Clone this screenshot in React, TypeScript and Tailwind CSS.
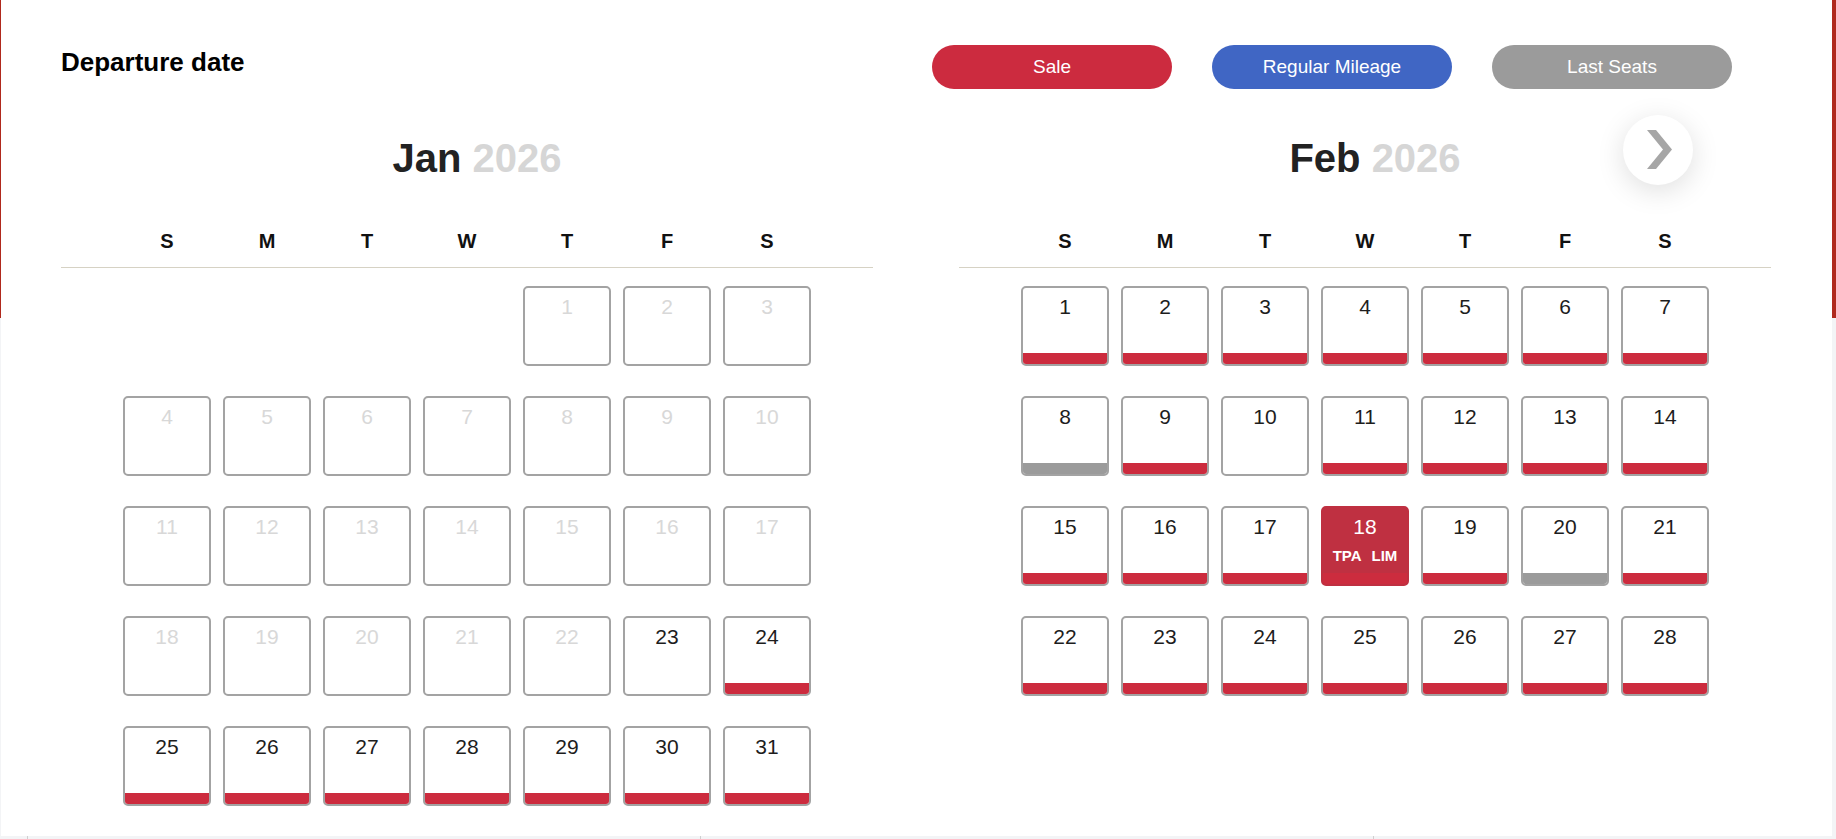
import React from 'react';

type Mark = 'sale' | 'last' | 'none';

type Day = {
  n: number;
  disabled?: boolean;
  mark: Mark;
  selected?: boolean;
};

const janDays: Day[] = Array.from({ length: 31 }, (_, i) => {
  const n = i + 1;
  if (n <= 22) return { n, disabled: true, mark: 'none' as Mark };
  if (n === 23) return { n, mark: 'none' as Mark };
  return { n, mark: 'sale' as Mark };
});

const febDays: Day[] = Array.from({ length: 28 }, (_, i) => {
  const n = i + 1;
  if (n === 8 || n === 20) return { n, mark: 'last' as Mark };
  if (n === 10) return { n, mark: 'none' as Mark };
  if (n === 18) return { n, mark: 'sale' as Mark, selected: true };
  return { n, mark: 'sale' as Mark };
});

const WEEK = ['S', 'M', 'T', 'W', 'T', 'F', 'S'];

function DayCell({ d }: { d: Day }) {
  if (d.selected) {
    return (
      <div className="mx-auto flex h-[80px] w-[88px] flex-col overflow-hidden rounded-[5px] border-2 border-[#bf3041] bg-[#bf3041] text-white">
        <div className="pt-[8px] text-center text-[21px] leading-[21px]">{d.n}</div>
        <div className="mt-[11px] flex justify-center gap-[10px] text-[15px] font-bold leading-[15px]">
          <span>TPA</span>
          <span>LIM</span>
        </div>
        <div className="mt-auto h-[11px] bg-[#cc2c3e]" />
      </div>
    );
  }
  return (
    <div className="mx-auto flex h-[80px] w-[88px] flex-col overflow-hidden rounded-[5px] border-2 border-[#a3a3a3] bg-white">
      <div
        className={
          d.disabled
            ? 'pt-[8px] text-center text-[21px] leading-[21px] text-[#d8d8d8]'
            : 'pt-[8px] text-center text-[21px] leading-[21px] text-[#1d1d1d]'
        }
      >
        {d.n}
      </div>
      {d.mark === 'sale' && <div className="mt-auto h-[11px] bg-[#cc2b3e]" />}
      {d.mark === 'last' && <div className="mt-auto h-[11px] bg-[#9b9b9b]" />}
    </div>
  );
}

function Month({
  name,
  year,
  offset,
  days,
  showNext,
}: {
  name: string;
  year: string;
  offset: number;
  days: Day[];
  showNext?: boolean;
}) {
  return (
    <div className="relative w-[812px]">
      {showNext && (
        <button className="absolute right-[78px] top-[-23px] h-[70px] w-[70px] rounded-full bg-white shadow-[0_6px_28px_rgba(0,0,0,0.13)]">
          <svg width="70" height="70" viewBox="0 0 70 70" className="block">
            <polygon points="24,15 33,15 49,34.5 33,54 24,54 40,34.5" fill="#a6a6a6" />
          </svg>
        </button>
      )}

      <h2 className="pl-[20px] text-center text-[40px] font-bold leading-[40px] text-[#222]">
        {name} <span className="text-[#d6d6d6]">{year}</span>
      </h2>

      <div className="mt-[53px] border-b border-[#d6d2c4] pb-[16px]">
        <div className="mx-auto grid w-[700px] grid-cols-7 text-center text-[20px] font-bold leading-[20px] text-[#111]">
          {WEEK.map((w, i) => (
            <span key={i}>{w}</span>
          ))}
        </div>
      </div>

      <div className="mx-auto mt-[18px] grid w-[700px] grid-cols-7 gap-y-[30px]">
        {Array.from({ length: offset }, (_, i) => (
          <div key={'b' + i} />
        ))}
        {days.map((d) => (
          <DayCell key={d.n} d={d} />
        ))}
      </div>
    </div>
  );
}

export default function App() {
  return (
    <div className="min-h-screen w-full bg-[linear-gradient(to_bottom,#b0291d_0,#b0291d_318px,#f3f4f6_318px)] font-['Liberation_Sans',Arial,sans-serif]">
      <div className="ml-[1px] mr-[4px] h-[836px] bg-white pl-[60px] pt-[45px]">
        {/* header */}
        <div className="flex w-[1710px] items-start justify-between">
          <h1 className="mt-[4px] text-[26px] font-bold leading-[26px] text-black">Departure date</h1>
          <div className="mr-[39px] flex gap-[40px] text-[19px] text-white">
            <div className="flex h-[44px] w-[240px] items-center justify-center rounded-full bg-[#cc2b3f]">Sale</div>
            <div className="flex h-[44px] w-[240px] items-center justify-center rounded-full bg-[#4066c4]">
              Regular Mileage
            </div>
            <div className="flex h-[44px] w-[240px] items-center justify-center rounded-full bg-[#9b9b9b]">
              Last Seats
            </div>
          </div>
        </div>

        {/* calendars */}
        <div className="mt-[49px] flex gap-[86px]">
          <Month name="Jan" year="2026" offset={4} days={janDays} />
          <Month name="Feb" year="2026" offset={0} days={febDays} showNext />
        </div>
      </div>
      <div className="flex h-[3px] gap-[672px] pl-[27px]">
        <div className="w-px bg-[#cfcfcf]" />
        <div className="w-px bg-[#cfcfcf]" />
        <div className="w-px bg-[#cfcfcf]" />
      </div>
    </div>
  );
}
